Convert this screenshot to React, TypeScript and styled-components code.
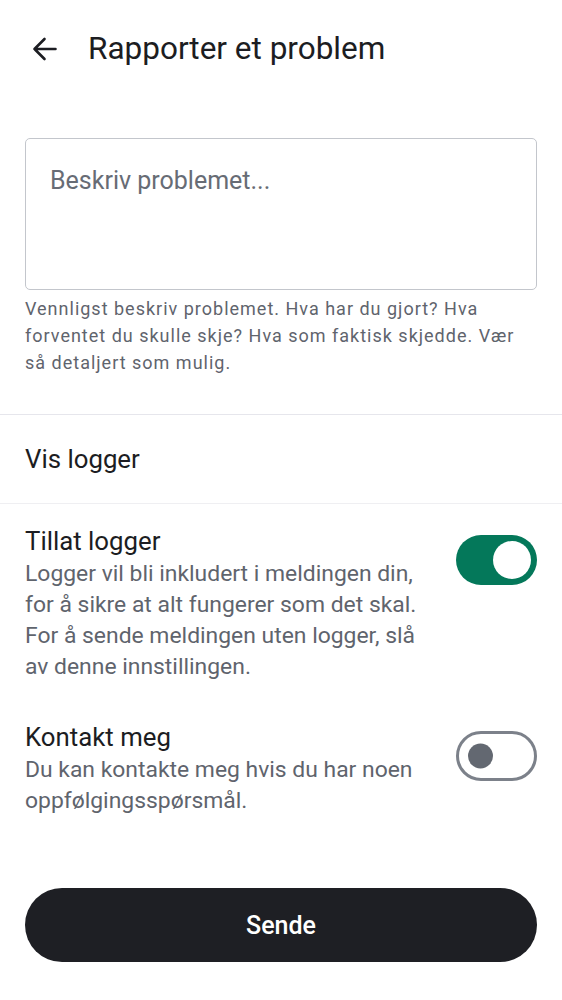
import React, { useState } from "react";
import styled, { createGlobalStyle } from "styled-components";

const Global = createGlobalStyle`
  html, body { margin: 0; padding: 0; background: #ffffff; }
  body { font-family: Roboto, "Noto Sans", "Liberation Sans", sans-serif; color: #1c1d22; }
  * { box-sizing: border-box; }
`;

const Page = styled.div`
  width: 562px;
  min-height: 1000px;
  display: flex;
  flex-direction: column;
  background: #fff;
`;

const Header = styled.header`
  height: 98px;
  display: flex;
  align-items: center;
  padding: 0 0 0 28px;
  gap: 28px;
`;

const BackButton = styled.button`
  width: 32px;
  height: 32px;
  padding: 0;
  border: 0;
  background: none;
  display: flex;
  align-items: center;
  justify-content: center;
  color: #1c1d22;
`;

const Title = styled.h1`
  margin: 0;
  font-size: 31.5px;
  font-weight: 400;
  color: #1c1d22;
  line-height: 36px;
`;

const Section = styled.div`
  padding: 40px 25px 0;
`;

const TextArea = styled.textarea`
  display: block;
  width: 100%;
  height: 152px;
  border: 1.5px solid #c3c6cc;
  border-radius: 5px;
  padding: 27px 24px;
  font-family: inherit;
  font-size: 25px;
  line-height: 30px;
  color: #1c1d22;
  resize: none;
  outline: none;
  &::placeholder { color: #676c75; }
`;

const Helper = styled.p`
  margin: 5px 0 0;
  font-size: 18px;
  line-height: 27px;
  letter-spacing: 1px;
  color: #5f646d;
`;

const Divider = styled.hr<{ $tone?: string }>`
  margin: 0;
  border: 0;
  height: 1px;
  background: ${(p) => p.$tone || "#e6e6ec"};
`;

const Spacer = styled.div`
  height: 38px;
`;

const LinkRow = styled.div`
  height: 88px;
  display: flex;
  align-items: center;
  padding: 0 25px;
  font-size: 25.8px;
  color: #1c1d22;
`;

const SettingRow = styled.div<{ $top: number }>`
  display: flex;
  justify-content: space-between;
  align-items: flex-start;
  gap: 20px;
  padding: ${(p) => p.$top}px 25px 0;
`;

const SettingText = styled.div`
  display: flex;
  flex-direction: column;
  max-width: 400px;
`;

const SettingTitle = styled.div`
  font-size: 25.8px;
  line-height: 30px;
  color: #1c1d22;
`;

const SettingDesc = styled.div`
  font-size: 22.9px;
  line-height: 31px;
  color: #5f646d;
  margin-top: 2px;
`;

const Switch = styled.button<{ $on: boolean }>`
  flex: none;
  width: 81px;
  height: 50px;
  margin-top: 9px;
  border-radius: 25px;
  padding: 0;
  position: relative;
  cursor: pointer;
  background: ${(p) => (p.$on ? "#04785a" : "#ffffff")};
  border: ${(p) => (p.$on ? "0" : "3px solid #7c818a")};
`;

const Knob = styled.span<{ $on: boolean }>`
  position: absolute;
  top: 50%;
  transform: translateY(-50%);
  border-radius: 50%;
  width: ${(p) => (p.$on ? 38 : 25)}px;
  height: ${(p) => (p.$on ? 38 : 25)}px;
  background: ${(p) => (p.$on ? "#ffffff" : "#636871")};
  ${(p) => (p.$on ? "right: 6px;" : "left: 9px;")}
`;

const Footer = styled.div`
  padding: 72px 25px 0;
`;

const SendButton = styled.button`
  width: 100%;
  height: 74px;
  border: 0;
  border-radius: 37px;
  background: #1e1f24;
  color: #ffffff;
  font-family: inherit;
  font-size: 25px;
  font-weight: 500;
  cursor: pointer;
`;

export default function App() {
  const [logs, setLogs] = useState(true);
  const [contact, setContact] = useState(false);
  return (
    <Page>
      <Global />
      <Header>
        <BackButton aria-label="Tilbake">
          <svg width="28" height="28" viewBox="0 0 28 28" fill="none">
            <path
              d="M25.5 14H4.5M14.5 4L4.5 14L14.5 24"
              stroke="currentColor"
              strokeWidth="2.6"
              strokeLinecap="round"
              strokeLinejoin="round"
            />
          </svg>
        </BackButton>
        <Title>Rapporter et problem</Title>
      </Header>
      <Section>
        <TextArea placeholder="Beskriv problemet..." />
        <Helper>
          Vennligst beskriv problemet. Hva har du gjort? Hva forventet du skulle skje? Hva som
          faktisk skjedde. Vær så detaljert som mulig.
        </Helper>
      </Section>
      <Spacer />
      <Divider />
      <LinkRow>Vis logger</LinkRow>
      <Divider $tone="#efeff2" />
      <SettingRow $top={22}>
        <SettingText>
          <SettingTitle>Tillat logger</SettingTitle>
          <SettingDesc>
            Logger vil bli inkludert i meldingen din, for å sikre at alt fungerer som det skal. For
            å sende meldingen uten logger, slå av denne innstillingen.
          </SettingDesc>
        </SettingText>
        <Switch $on={logs} onClick={() => setLogs(!logs)} aria-pressed={logs}>
          <Knob $on={logs} />
        </Switch>
      </SettingRow>
      <SettingRow $top={40}>
        <SettingText>
          <SettingTitle>Kontakt meg</SettingTitle>
          <SettingDesc>Du kan kontakte meg hvis du har noen oppfølgingsspørsmål.</SettingDesc>
        </SettingText>
        <Switch $on={contact} onClick={() => setContact(!contact)} aria-pressed={contact}>
          <Knob $on={contact} />
        </Switch>
      </SettingRow>
      <Footer>
        <SendButton>Sende</SendButton>
      </Footer>
    </Page>
  );
}
